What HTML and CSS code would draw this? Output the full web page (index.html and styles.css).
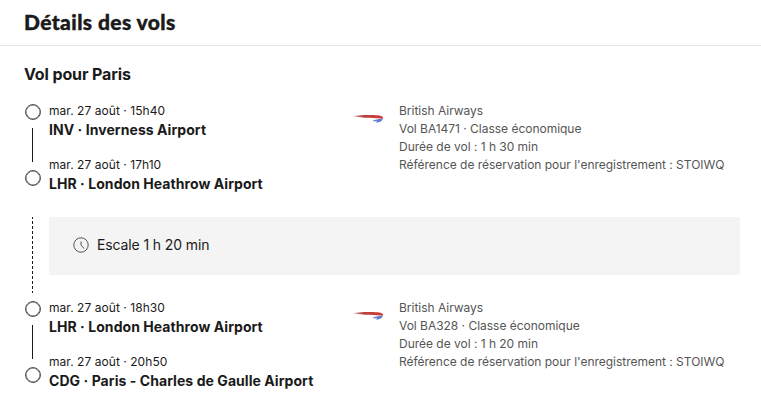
FILE: index.html
```html
<!DOCTYPE html>
<html lang="fr">
<head>
<meta charset="utf-8">
<title>Détails des vols</title>
<link rel="stylesheet" href="styles.css">
</head>
<body>
<svg class="defs" width="0" height="0" aria-hidden="true">
  <defs>
    <linearGradient id="ribbon-red" x1="0" x2="1"><stop offset="0" stop-color="#d9938f"/><stop offset=".35" stop-color="#b54440"/><stop offset="1" stop-color="#d63b35"/></linearGradient>
    <symbol id="ribbon" viewBox="0 0 32 12">
      <path fill="url(#ribbon-red)" d="M0 3.200C7 1.800 18 1.600 25 2.300c3.500.4 5.200 1.200 5.200 3.400C24 4.900 9 5.100 0 3.200Z"/>
      <path fill="#6579d0" d="M19.500 8.300c2.500-2 5.200-1.900 10.300-2.700-.3 2.300-2.500 4-6.800 4.100.6-.5 1-.9 1-1.400Z"/>
    </symbol>
  </defs>
</svg>
<header class="header"><h1 class="title">Détails des vols</h1></header>
<main class="content">
  <h2 class="subtitle">Vol pour Paris</h2>
  <section class="flight">
    <div class="rail"><i class="dot"></i><i class="line"></i><i class="dot"></i></div>
    <div class="stops">
      <div class="stop"><p class="time">mar. 27 août · 15h40</p><p class="airport">INV · Inverness Airport</p></div>
      <div class="stop"><p class="time">mar. 27 août · 17h10</p><p class="airport">LHR · London Heathrow Airport</p></div>
    </div>
    <svg class="logo" width="32" height="12"><use href="#ribbon"/></svg>
    <div class="details">
      <p>British Airways</p>
      <p>Vol BA1471 · Classe économique</p>
      <p>Durée de vol : 1 h 30 min</p>
      <p>Référence de réservation pour l'enregistrement : STOIWQ</p>
    </div>
  </section>
  <section class="layover">
    <i class="dashes"></i>
    <div class="layover-box">
      <svg width="16" height="16" viewBox="0 0 16 16" fill="none" stroke="#555" stroke-width="1"><circle cx="8" cy="8" r="7.200"/><path d="M8 4.500V8l3 3.500"/></svg>
      <span>Escale 1 h 20 min</span>
    </div>
  </section>
  <section class="flight">
    <div class="rail"><i class="dot"></i><i class="line"></i><i class="dot"></i></div>
    <div class="stops">
      <div class="stop"><p class="time">mar. 27 août · 18h30</p><p class="airport">LHR · London Heathrow Airport</p></div>
      <div class="stop"><p class="time">mar. 27 août · 20h50</p><p class="airport">CDG · Paris - Charles de Gaulle Airport</p></div>
    </div>
    <svg class="logo" width="32" height="12"><use href="#ribbon"/></svg>
    <div class="details">
      <p>British Airways</p>
      <p>Vol BA328 · Classe économique</p>
      <p>Durée de vol : 1 h 20 min</p>
      <p>Référence de réservation pour l'enregistrement : STOIWQ</p>
    </div>
  </section>
</main>
</body>
</html>
```
FILE: styles.css
```css
* { box-sizing: border-box; }
body { margin: 0; background: #fff; color: #1a1a1a; font-family: Inter, "Liberation Sans", sans-serif; }
h1, h2, p { margin: 0; white-space: nowrap; }
.defs { position: absolute; }
.header { height: 46px; padding: 8px 24px 0; border-bottom: 1px solid #e3e3e3; }
.title { font: 900 21px/28px Lato, sans-serif; letter-spacing: 0.4px; -webkit-text-stroke: 0.4px #1a1a1a; }
.content { padding: 18px 21px 0 24px; }
.subtitle { font-size: 16px; line-height: 20px; font-weight: 700; letter-spacing: -0.12px; margin-bottom: 18px; }
.flight { display: grid; grid-template-columns: 25px 304px 46px 1fr; height: 92px; }
.rail { display: flex; flex-direction: column; align-items: center; width: 18px; padding-top: 2px; }
.dot { width: 16px; height: 16px; border: 1px solid #555; border-radius: 50%; box-shadow: inset 0 0 0 0.5px #555; }
.line { width: 1px; height: 34px; margin: 8px 1px 8px 0; background: #1a1a1a; }
.stop { height: 54px; }
.time { font-size: 12px; line-height: 18px; letter-spacing: 0.05px; }
.airport { font-size: 14px; line-height: 20px; font-weight: 700; letter-spacing: 0.06px; }
.logo { margin-top: 11px; }
.details { font-size: 12px; line-height: 18px; color: #555; letter-spacing: -0.02px; }
.layover { display: flex; height: 80px; margin: 23px 0 2px; }
.dashes { width: 1px; height: 76px; margin: 0 16px 0 8px; background: repeating-linear-gradient(to bottom, #1a1a1a 0 2px, transparent 2px 4px, #1a1a1a 4px 5px); }
.layover-box { flex: 1; height: 58px; padding: 0 24px 2px; display: flex; align-items: center; gap: 8px; background: #f4f4f4; font-size: 14px; line-height: 20px; letter-spacing: -0.12px; }
```
